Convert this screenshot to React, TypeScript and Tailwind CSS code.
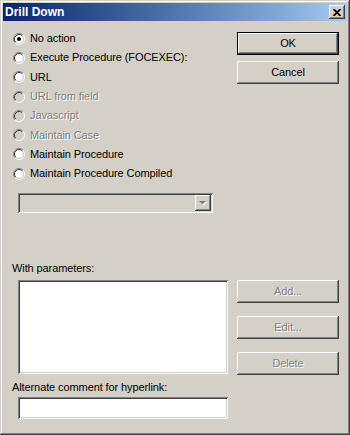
import type { ReactNode } from "react";

const raised =
  "shadow-[inset_-1px_-1px_#404040,inset_1px_1px_#ffffff,inset_-2px_-2px_#808080,inset_2px_2px_#d4d0c8]";
const sunken =
  "shadow-[inset_1px_1px_#808080,inset_-1px_-1px_#ffffff,inset_2px_2px_#404040,inset_-2px_-2px_#d4d0c8]";
const disabledText = "text-[#808080] [text-shadow:1px_1px_0_#ffffff]";

function Radio({ checked = false, disabled = false }: { checked?: boolean; disabled?: boolean }) {
  return (
    <svg width="12" height="12" viewBox="0 0 12 12" className="shrink-0">
      <circle cx="6" cy="6" r="4.2" fill={disabled ? "#d4d0c8" : "#ffffff"} />
      <path d="M2.11 9.89 A5.5 5.5 0 0 1 9.89 2.11" fill="none" stroke="#808080" />
      <path d="M2.82 9.18 A4.5 4.5 0 0 1 9.18 2.82" fill="none" stroke="#404040" />
      <path d="M2.11 9.89 A5.5 5.5 0 0 0 9.89 2.11" fill="none" stroke="#ffffff" />
      <path d="M2.82 9.18 A4.5 4.5 0 0 0 9.18 2.82" fill="none" stroke="#d4d0c8" />
      {checked && <circle cx="6" cy="6" r="2" fill="#000000" />}
    </svg>
  );
}

function Option({ label, checked, disabled }: { label: string; checked?: boolean; disabled?: boolean }) {
  return (
    <div className="flex h-[19.3px] items-center gap-[5px] pl-[1px]">
      <Radio checked={checked} disabled={disabled} />
      <span className={disabled ? disabledText : "text-black"}>{label}</span>
    </div>
  );
}

function Button({
  children,
  disabled,
  isDefault,
  className = "",
}: {
  children: ReactNode;
  disabled?: boolean;
  isDefault?: boolean;
  className?: string;
}) {
  if (isDefault) {
    return (
      <div className={`h-[23px] w-[102px] border border-black ${className}`}>
        <div className={`flex h-full w-full items-center justify-center ${raised}`}>{children}</div>
      </div>
    );
  }
  return (
    <div
      className={`flex h-[23px] w-[102px] items-center justify-center ${raised} ${
        disabled ? disabledText : "text-black"
      } ${className}`}
    >
      {children}
    </div>
  );
}

export default function App() {
  return (
    <div className="h-[435px] w-[350px] bg-[#d4d0c8] p-[3px] font-['Liberation_Sans',Arial,sans-serif] text-[11px] leading-[13px] tracking-[-0.1px] shadow-[inset_-1px_-1px_#404040,inset_1px_1px_#d4d0c8,inset_-2px_-2px_#808080,inset_2px_2px_#ffffff]">
      <div className="flex h-[18px] items-center justify-between bg-gradient-to-r from-[#0a246a] to-[#a6caf0] pl-[2px] pr-[2px]">
        <span className="text-[12px] font-bold tracking-normal text-white">Drill Down</span>
        <div className={`flex h-[14px] w-[16px] items-center justify-center bg-[#d4d0c8] ${raised}`}>
          <svg width="8" height="7" viewBox="0 0 8 7">
            <path d="M0.5 0 L7.5 7 M7.5 0 L0.5 7" stroke="#000" strokeWidth="1.8" fill="none" />
          </svg>
        </div>
      </div>

      <div className="flex">
        <div className="w-[234px] pl-[9px] pt-[8px]">
          <Option label="No action" checked />
          <Option label="Execute Procedure (FOCEXEC):" />
          <Option label="URL" />
          <Option label="URL from field" disabled />
          <Option label="Javascript" disabled />
          <Option label="Maintain Case" disabled />
          <Option label="Maintain Procedure" />
          <Option label="Maintain Procedure Compiled" />

          <div className={`ml-[6px] mt-[10px] flex h-[20px] w-[195px] justify-end p-[2px] ${sunken}`}>
            <div className={`flex h-[16px] w-[16px] items-center justify-center ${raised}`}>
              <svg width="8" height="5" viewBox="0 0 8 5">
                <path d="M1 1 H8 L4.5 4.5 Z" fill="#ffffff" />
                <path d="M0 0 H7 L3.5 3.5 Z" fill="#808080" />
              </svg>
            </div>
          </div>

          <div className="mt-[49px] h-[13px]">With parameters:</div>
          <div className={`ml-[6px] mt-[5px] h-[94px] w-[210px] bg-white ${sunken}`} />

          <div className="mt-[7px] h-[13px]">Alternate comment for hyperlink:</div>
          <div className={`ml-[6px] mt-[3px] h-[22px] w-[210px] bg-white ${sunken}`} />
        </div>

        <div className="flex flex-col pt-[11px]">
          <Button isDefault>OK</Button>
          <Button className="mt-[6px]">Cancel</Button>
          <Button disabled className="mt-[196px]">Add...</Button>
          <Button disabled className="mt-[13px]">Edit...</Button>
          <Button disabled className="mt-[13px]">Delete</Button>
        </div>
      </div>
    </div>
  );
}
